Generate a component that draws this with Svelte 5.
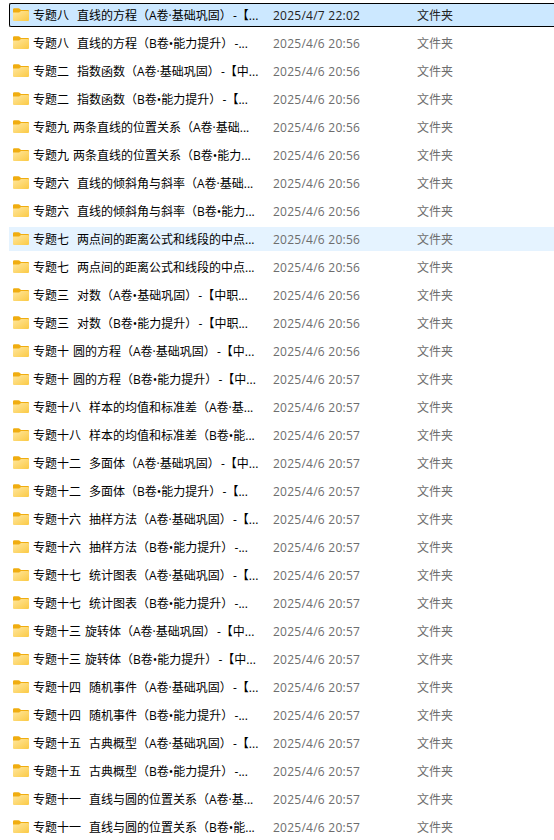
<script>
	const names = [
		'专题八  直线的方程（A卷·基础巩固）-【...',
		'专题八  直线的方程（B卷•能力提升）-...',
		'专题二  指数函数（A卷·基础巩固）-【中...',
		'专题二  指数函数（B卷•能力提升）-【...',
		'专题九 两条直线的位置关系（A卷·基础...',
		'专题九 两条直线的位置关系（B卷•能力...',
		'专题六  直线的倾斜角与斜率（A卷·基础...',
		'专题六  直线的倾斜角与斜率（B卷•能力...',
		'专题七  两点间的距离公式和线段的中点...',
		'专题七  两点间的距离公式和线段的中点...',
		'专题三  对数（A卷•基础巩固）-【中职...',
		'专题三  对数（B卷•能力提升）-【中职...',
		'专题十 圆的方程（A卷·基础巩固）-【中...',
		'专题十 圆的方程（B卷•能力提升）-【中...',
		'专题十八  样本的均值和标准差（A卷·基...',
		'专题十八  样本的均值和标准差（B卷•能...',
		'专题十二  多面体（A卷·基础巩固）-【中...',
		'专题十二  多面体（B卷•能力提升）-【...',
		'专题十六  抽样方法（A卷·基础巩固）-【...',
		'专题十六  抽样方法（B卷•能力提升）-...',
		'专题十七  统计图表（A卷·基础巩固）-【...',
		'专题十七  统计图表（B卷•能力提升）-...',
		'专题十三 旋转体（A卷·基础巩固）-【中...',
		'专题十三 旋转体（B卷•能力提升）-【中...',
		'专题十四  随机事件（A卷·基础巩固）-【...',
		'专题十四  随机事件（B卷•能力提升）-...',
		'专题十五  古典概型（A卷·基础巩固）-【...',
		'专题十五  古典概型（B卷•能力提升）-...',
		'专题十一  直线与圆的位置关系（A卷·基...',
		'专题十一  直线与圆的位置关系（B卷•能...'
	];

	const dateFor = (i) => {
		if (i === 0) return '2025/4/7 22:02';
		return i < 13 ? '2025/4/6 20:56' : '2025/4/6 20:57';
	};

	let selected = 0;
	let hovered = 8;
</script>

<div class="file-list">
	{#each names as name, i}
		{@const parts = name.split('-')}
		<div class="row" class:selected={i === selected} class:hovered={i === hovered}>
			<svg class="folder" width="16" height="14" viewBox="0 0 16 14">
				<defs>
					<linearGradient id="front-{i}" x1="0" y1="0" x2="1" y2="1">
						<stop offset="0" stop-color="#ffe7a0" />
						<stop offset="1" stop-color="#fbca45" />
					</linearGradient>
				</defs>
				<path d="M0 1.5Q0 .3 1.2 .3H5.5Q6.2 .3 6.7 .8L8 2.1H15Q16 2.1 16 3.1V7H0Z" fill="#f0ad10" />
				<path
					d="M0 4.5H5.6Q6.2 4.5 6.7 4L7.3 3.4Q7.7 2.9 8.3 2.9H15Q16 2.9 16 3.9V12Q16 13 15 13H1Q0 13 0 12Z"
					fill="url(#front-{i})"
				/>
			</svg>
			<span class="name">{parts[0]}{#if parts.length > 1}<span class="dash">-</span>{parts[1]}{/if}</span>
			<span class="date">{dateFor(i)}</span>
			<span class="type">文件夹</span>
		</div>
	{/each}
</div>

<style>
	:global(body) {
		background: #fff;
		overflow: hidden;
	}

	.file-list {
		display: flex;
		flex-direction: column;
		gap: 4px;
		box-sizing: border-box;
		height: 840px;
		padding: 3px 0 0 9px;
		overflow: hidden;
		font-family: 'Open Sans', 'Noto Sans CJK SC', sans-serif;
		font-size: 12px;
		line-height: 20px;
		color: #000;
	}

	.row {
		display: grid;
		grid-template-columns: 20px 240px 144px 1fr;
		align-items: center;
		flex: none;
		box-sizing: border-box;
		height: 24px;
		padding-left: 3px;
		border: 1px solid transparent;
		border-right: 0;
		white-space: pre;
	}

	.selected {
		background: #cce8ff;
		border-color: #000;
		border-radius: 2px 0 0 2px;
	}

	.hovered {
		background: #e5f3ff;
		border-color: #e5f3ff;
	}

	.folder {
		display: block;
	}

	.name,
	.date,
	.type {
		padding-top: 2px;
	}

	.name {
		word-spacing: 0.9px;
	}

	.dash {
		padding-left: 1.2px;
	}

	.date,
	.type {
		color: #6d6d6d;
	}

	.date {
		letter-spacing: 0.25px;
	}

	.selected .date,
	.selected .type {
		color: #222;
	}
</style>
